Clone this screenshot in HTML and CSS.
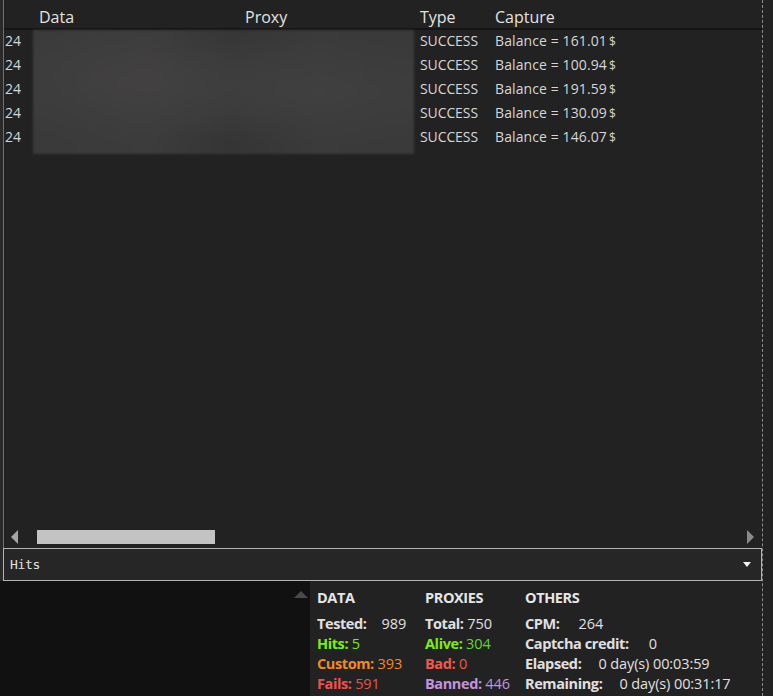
FILE: index.html
```html
<!DOCTYPE html>
<html>
<head>
<meta charset="utf-8">
<link rel="stylesheet" href="styles.css">
</head>
<body>
<div class="window">
  <div class="main">
    <div class="gridview">
      <div class="header">
        <span class="hc hc-num"></span>
        <span class="hc hc-data">Data</span>
        <span class="hc hc-proxy">Proxy</span>
        <span class="hc hc-type">Type</span>
        <span class="hc hc-capture">Capture</span>
      </div>
      <div class="rows">
        <div class="blur"></div>
        <span class="num r1">24</span><span class="type r1">SUCCESS</span><span class="cap r1">Balance = 161.01<span class="cur">$</span></span>
        <span class="num r2">24</span><span class="type r2">SUCCESS</span><span class="cap r2">Balance = 100.94<span class="cur">$</span></span>
        <span class="num r3">24</span><span class="type r3">SUCCESS</span><span class="cap r3">Balance = 191.59<span class="cur">$</span></span>
        <span class="num r4">24</span><span class="type r4">SUCCESS</span><span class="cap r4">Balance = 130.09<span class="cur">$</span></span>
        <span class="num r5">24</span><span class="type r5">SUCCESS</span><span class="cap r5">Balance = 146.07<span class="cur">$</span></span>
      </div>
      <div class="hscroll">
        <span class="arrow-left"></span>
        <span class="thumb"></span>
        <span class="spacer"></span>
        <span class="arrow-right"></span>
      </div>
    </div>
    <div class="combo">
      <span class="combo-text">Hits</span>
      <span class="combo-arrow"></span>
    </div>
    <div class="bottom">
      <div class="log">
        <span class="vs-up"></span>
      </div>
      <div class="stats">
        <div class="col col-data">
          <div class="h">DATA</div>
          <div class="line white"><b>Tested:</b><span class="gap1"></span>989</div>
          <div class="line green"><b>Hits:</b> 5</div>
          <div class="line orange"><b>Custom:</b> 393</div>
          <div class="line red"><b>Fails:</b> 591</div>
        </div>
        <div class="col col-proxies">
          <div class="h">PROXIES</div>
          <div class="line white"><b>Total:</b> 750</div>
          <div class="line green"><b>Alive:</b> <span class="green2">304</span></div>
          <div class="line red2"><b>Bad:</b> 0</div>
          <div class="line purple"><b>Banned:</b> 446</div>
        </div>
        <div class="col col-others">
          <div class="h">OTHERS</div>
          <div class="line white"><b>CPM:</b><span class="gap2"></span>264</div>
          <div class="line white"><b>Captcha credit:</b><span class="gap3"></span>0</div>
          <div class="line white"><b>Elapsed:</b><span class="gap4"></span>0 day(s) 00:03:59</div>
          <div class="line white"><b>Remaining:</b><span class="gap5"></span>0 day(s) 00:31:17</div>
        </div>
      </div>
    </div>
  </div>
  <div class="gutter"></div>
</div>
</body>
</html>
```
FILE: styles.css
```css
* { box-sizing: border-box; }
html, body { margin: 0; padding: 0; }
body {
  background: #222222;
  font-family: "Open Sans", "Noto Sans", sans-serif;
  color: #d9d9d9;
  width: 773px;
  height: 696px;
  overflow: hidden;
}
.window {
  display: flex;
  height: 696px;
}
.main {
  width: 762px;
  display: flex;
  flex-direction: column;
  background: #2a2a2a;
}
.gutter {
  flex: 1;
  border-left: 1px dashed #8a8a8a;
  background: #222;
}
.gridview {
  height: 548px;
  margin-left: 3px;
  border-left: 1px solid #6e6e6e;
  background: #222222;
  display: flex;
  flex-direction: column;
}
.header {
  height: 30px;
  border-bottom: 2px solid #141414;
  display: grid;
  grid-template-columns: 35px 206px 175px 75px 1fr;
  font-size: 16px;
  color: #e2e2e2;
  line-height: 20px;
  padding-top: 7px;
  letter-spacing: 0;
}
.rows {
  display: grid;
  grid-template-columns: 29px 381px 81px 1fr;
  grid-template-rows: repeat(5, 24px);
  font-size: 14px;
  line-height: 22px;
  color: #d6d6d6;
  letter-spacing: 0;
}
.num { grid-column: 1; padding-left: 1px; }
.type { grid-column: 3; padding-left: 6px; letter-spacing: -0.1px; }
.cap { grid-column: 4; letter-spacing: 0.1px; }
.r1 { grid-row: 1; } .r2 { grid-row: 2; } .r3 { grid-row: 3; } .r4 { grid-row: 4; } .r5 { grid-row: 5; }
.cur { font-size: 12px; margin-left: 2px; letter-spacing: 0; }
.blur {
  grid-column: 2;
  grid-row: 1 / 6;
  height: 124px;
  background:
    radial-gradient(ellipse at 30% 40%, rgba(70,68,68,0.6), rgba(0,0,0,0) 60%),
    radial-gradient(ellipse at 75% 50%, rgba(66,66,66,0.6), rgba(0,0,0,0) 60%),
    linear-gradient(90deg, #3a3a3a 0%, #3d3c3c 30%, #353535 52%, #3b3b3b 75%, #3a3a3a 100%);
  filter: blur(1px);
}
.hscroll {
  margin-top: auto;
  height: 20px;
  display: flex;
  align-items: center;
  padding: 0 6px 2px 6px;
}
.arrow-left {
  width: 0; height: 0;
  border-top: 7px solid transparent;
  border-bottom: 7px solid transparent;
  border-right: 7px solid #a5a5a5;
  margin-left: 1px;
}
.thumb {
  width: 178px;
  height: 14px;
  background: #c3c3c3;
  margin-left: 19px;
}
.spacer { flex: 1; }
.arrow-right {
  width: 0; height: 0;
  border-top: 7px solid transparent;
  border-bottom: 7px solid transparent;
  border-left: 7px solid #8a8a8a;
  margin-right: 2px;
}
.combo {
  height: 33px;
  margin-left: 3px;
  border: 1px solid #b5b5b5;
  background: #262626;
  display: flex;
  align-items: center;
  padding: 0 10px 0 6px;
}
.combo-text {
  font-family: "DejaVu Sans Mono", "Liberation Mono", monospace;
  font-size: 13px;
  color: #e0e0e0;
  flex: 1;
  letter-spacing: -0.3px;
}
.combo-arrow {
  width: 0; height: 0;
  border-left: 4px solid transparent;
  border-right: 4px solid transparent;
  border-top: 5px solid #f0f0f0;
}
.bottom {
  flex: 1;
  display: flex;
  background: #222;
}
.log {
  width: 310px;
  background: #111111;
  display: flex;
  justify-content: flex-end;
  align-items: flex-start;
  padding: 10px 2px 0 0;
}
.vs-up {
  width: 0; height: 0;
  border-left: 7px solid transparent;
  border-right: 7px solid transparent;
  border-bottom: 7px solid #4a4a4a;
}
.stats {
  flex: 1;
  display: flex;
  padding: 7px 0 0 7px;
  font-size: 14.5px;
  letter-spacing: -0.1px;
  line-height: 20px;
}
.col-data { width: 108px; }
.col-proxies { width: 100px; }
.col-others { flex: 1; }
.h {
  font-weight: 700;
  color: #e6e6e6;
  margin-bottom: 6px;
  letter-spacing: -0.4px;
}
.line b { font-weight: 700; letter-spacing: -0.4px; }
.white { color: #e0e0e0; }
.green { color: #7cf000; }
.green2 { color: #5ed62a; }
.orange { color: #f5891a; }
.red { color: #ec524c; }
.red2 { color: #ee5a48; }
.purple { color: #c493dc; }
.gap1 { display: inline-block; width: 15px; }
.gap2 { display: inline-block; width: 19px; }
.gap3 { display: inline-block; width: 20px; }
.gap4 { display: inline-block; width: 17px; }
.gap5 { display: inline-block; width: 17px; }
```
